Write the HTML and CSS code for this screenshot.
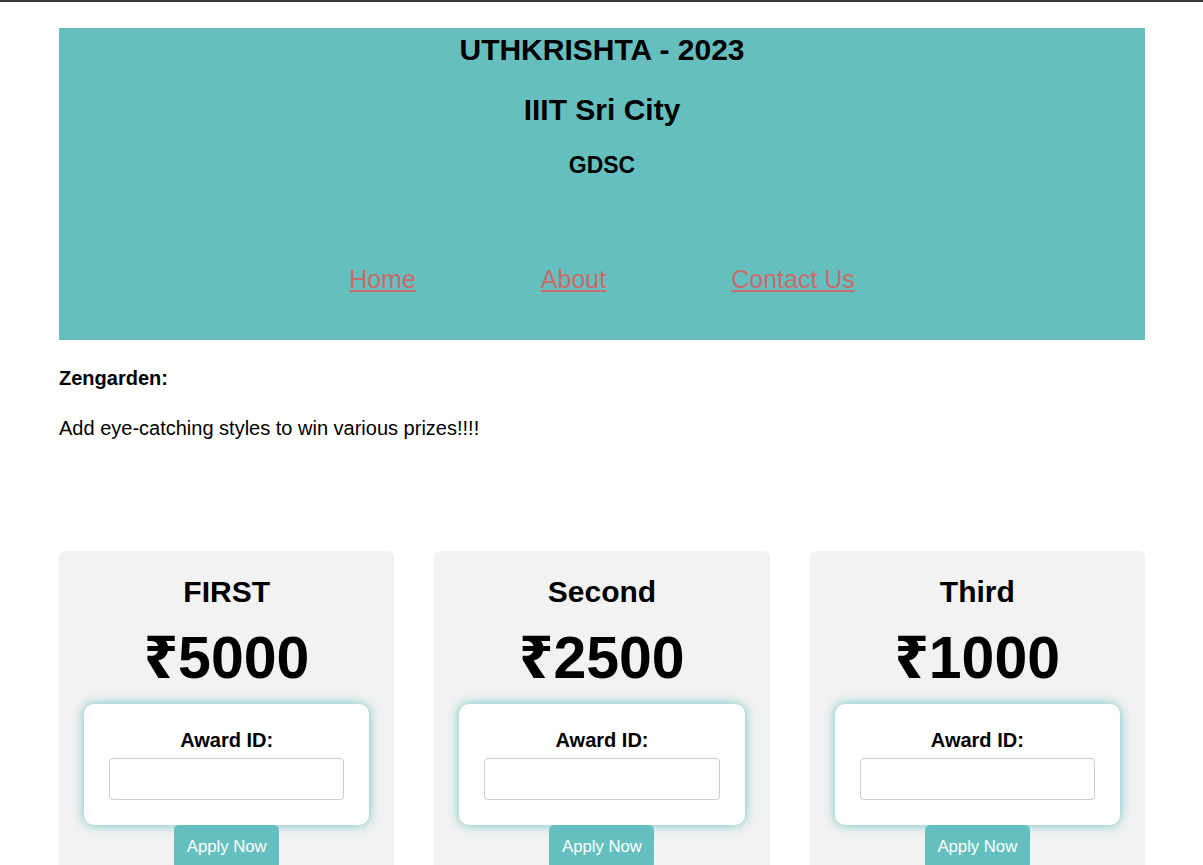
FILE: index.html
```html
<!DOCTYPE html>
<html lang="en">
<head>
<meta charset="utf-8">
<title>UTHKRISHTA - 2023</title>
<link rel="stylesheet" href="styles.css">
</head>
<body>
<div class="page">
  <header class="hero">
    <h1 class="title">UTHKRISHTA - 2023</h1>
    <h2 class="subtitle">IIIT Sri City</h2>
    <h3 class="org">GDSC</h3>
    <nav class="nav">
      <a href="#">Home</a>
      <a href="#">About</a>
      <a href="#">Contact Us</a>
    </nav>
  </header>

  <p class="label">Zengarden:</p>
  <p class="intro">Add eye-catching styles to win various prizes!!!!</p>

  <section class="cards">
    <div class="card">
      <h2 class="rank">FIRST</h2>
      <div class="amount"><span class="rupee">₹</span>5000</div>
      <div class="box">
        <div class="box-label">Award ID:</div>
        <input class="field" type="text">
      </div>
      <button class="apply">Apply Now</button>
    </div>
    <div class="card">
      <h2 class="rank">Second</h2>
      <div class="amount"><span class="rupee">₹</span>2500</div>
      <div class="box">
        <div class="box-label">Award ID:</div>
        <input class="field" type="text">
      </div>
      <button class="apply">Apply Now</button>
    </div>
    <div class="card">
      <h2 class="rank">Third</h2>
      <div class="amount"><span class="rupee">₹</span>1000</div>
      <div class="box">
        <div class="box-label">Award ID:</div>
        <input class="field" type="text">
      </div>
      <button class="apply">Apply Now</button>
    </div>
  </section>
</div>
</body>
</html>
```

FILE: styles.css
```css
html, body {
  margin: 0;
  padding: 0;
}
body {
  background: #ffffff;
  color: #000000;
  font-family: "Liberation Sans", Arial, sans-serif;
  border-top: 2px solid #383838;
}
.page {
  margin: 26px 58px 0 59px;
}
.hero {
  background: #66bfbf;
  text-align: center;
  padding: 5px 0 47px;
}
.title {
  margin: 0;
  font-size: 30px;
  line-height: 34px;
  font-weight: bold;
}
.subtitle {
  margin: 26px 0 0;
  font-size: 30px;
  line-height: 34px;
  font-weight: bold;
}
.org {
  margin: 24px 0 0;
  font-size: 23px;
  line-height: 28px;
  font-weight: bold;
}
.nav {
  margin-top: 84px;
  display: flex;
  justify-content: center;
  gap: 125px;
  font-size: 25px;
  line-height: 30px;
  padding-top: 1px;
  height: 29px;
}
.nav a {
  color: #c86b6b;
  text-decoration: underline;
}
.label {
  margin: 26px 0 0;
  font-size: 20px;
  line-height: 24px;
  font-weight: bold;
}
.intro {
  margin: 26px 0 0;
  font-size: 20px;
  line-height: 24px;
}
.cards {
  margin-top: 111px;
  display: grid;
  grid-template-columns: repeat(3, 1fr);
  gap: 40px;
}
.card {
  background: #f2f2f2;
  border-radius: 6px;
  padding: 23px 25px 30px;
  text-align: center;
}
.rank {
  margin: 0;
  font-size: 30px;
  line-height: 36px;
  font-weight: bold;
}
.amount {
  margin-top: 16px;
  font-size: 59px;
  line-height: 64px;
  height: 64px;
  font-weight: bold;
}
.rupee {
  font-family: "Noto Sans", "DejaVu Sans", sans-serif;
  font-weight: 800;
  line-height: 0;
}
.box {
  margin-top: 14px;
  background: #ffffff;
  border-radius: 10px;
  box-shadow: 0 0 11px rgba(102, 191, 191, 0.95);
  padding: 24px 25px 25px;
}
.box-label {
  font-size: 20px;
  line-height: 24px;
  font-weight: bold;
}
.field {
  display: block;
  box-sizing: border-box;
  width: 100%;
  height: 42px;
  margin-top: 6px;
  border: 1px solid #cccccc;
  border-radius: 4px;
  background: #ffffff;
}
.apply {
  display: block;
  margin: 0 auto;
  width: 105px;
  height: 44px;
  border: none;
  border-radius: 5px;
  background: #66bfbf;
  color: #ffffff;
  font-family: "Liberation Sans", Arial, sans-serif;
  font-size: 16.7px;
  line-height: 44px;
  padding: 0;
}
```
